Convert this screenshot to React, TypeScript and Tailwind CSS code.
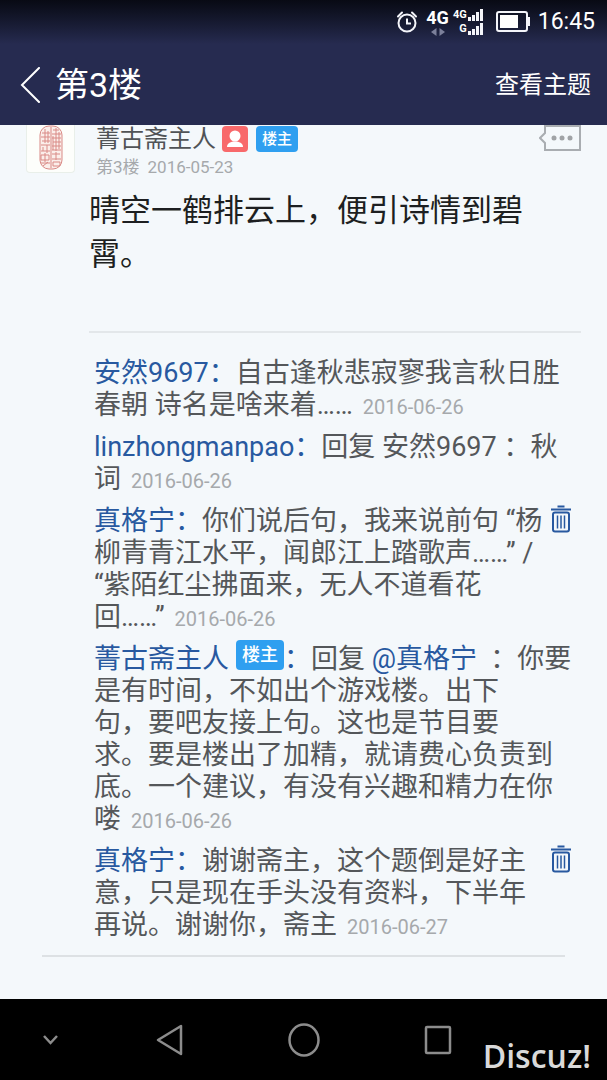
import type { ReactNode } from "react";

type Reply = {
    id: number;
    author: string;
    isOwner?: boolean;
    canDelete?: boolean;
    date: string;
    content: ReactNode;
};

const replies: Reply[] = [
    {
        id: 1,
        author: "安然9697",
        date: "2016-06-26",
        content: (
            <>
                自古逢秋悲寂寥我言秋日胜
                <br />
                春朝 诗名是啥来着……
            </>
        ),
    },
    {
        id: 2,
        author: "linzhongmanpao",
        date: "2016-06-26",
        content: (
            <>
                回复 安然9697 ：秋
                <br />词
            </>
        ),
    },
    {
        id: 3,
        author: "真格宁",
        canDelete: true,
        date: "2016-06-26",
        content: (
            <>
                你们说后句，我来说前句 “杨
                <br />
                柳青青江水平，闻郎江上踏歌声……” /
                <br />
                “紫陌红尘拂面来，无人不道看花
                <br />
                回……”
            </>
        ),
    },
    {
        id: 4,
        author: "菁古斋主人",
        isOwner: true,
        date: "2016-06-26",
        content: (
            <>
                回复{" "}
                <a href="#user" className="text-[#2859a0]">
                    @真格宁
                </a>
                &nbsp; ：你要
                <br />
                是有时间，不如出个游戏楼。出下
                <br />
                句，要吧友接上句。这也是节目要
                <br />
                求。要是楼出了加精，就请费心负责到
                <br />
                底。一个建议，有没有兴趣和精力在你
                <br />喽
            </>
        ),
    },
    {
        id: 5,
        author: "真格宁",
        canDelete: true,
        date: "2016-06-27",
        content: (
            <>
                谢谢斋主，这个题倒是好主
                <br />
                意，只是现在手头没有资料，下半年
                <br />
                再说。谢谢你，斋主
            </>
        ),
    },
];

function StatusBar() {
    return (
        <div className="flex h-11 items-center justify-end bg-linear-to-b from-[#080a14] to-[#262b50] pr-3 text-white">
            <svg width="22" height="24" viewBox="0 0 22 24" fill="none" stroke="#f4f5fa" strokeWidth="2">
                <circle cx="11" cy="13" r="8.5" />
                <path d="M11 8.5V13.5H15" />
                <path d="M2 6.5L6 2.5M20 6.5L16 2.5" strokeLinecap="round" />
            </svg>
            <div className="ml-2 flex flex-col items-center">
                <span className="text-lg leading-5 font-bold">4G</span>
                <svg width="14" height="8" viewBox="0 0 14 8" fill="#7c809a">
                    <path d="M5.5 0V8L0 4ZM8.5 0V8L14 4Z" />
                </svg>
            </div>
            <div className="ml-1 flex flex-col items-end text-[11px] leading-[14px] font-bold">
                <div className="flex items-center">
                    4G
                    <SignalBars />
                </div>
                <div className="flex items-center">
                    G
                    <SignalBars />
                </div>
            </div>
            <svg className="ml-3" width="34" height="22" viewBox="0 0 34 22" fill="none">
                <rect x="1" y="1" width="30" height="19" rx="2" stroke="#f4f5fa" strokeWidth="2" />
                <rect x="4" y="4" width="18" height="13" fill="#fff" />
                <path d="M32 6H34V15H32Z" fill="#f4f5fa" />
            </svg>
            <span className="ml-2 text-[23px] leading-7">16:45</span>
        </div>
    );
}

function SignalBars() {
    return (
        <svg width="17" height="12" viewBox="0 0 17 12" fill="#f4f5fa">
            <path d="M1 8H4V12H1ZM5 6H8V12H5ZM9 3H12V12H9ZM13 0H16V12H13Z" />
        </svg>
    );
}

function Seal() {
    return (
        <svg width="49" height="49" viewBox="0 0 49 49" fill="none" stroke="#d98a86" strokeWidth="1">
            <rect x="13" y="1" width="22" height="43" rx="9" fill="#fbeeea" />
            <path d="M15 8H23M14 12H23M18 4V18M15 16H23M21 6V18M14 20H23M16 22V26M20 20V28M14 26H23" />
            <path d="M26 5H32M25 9H34M29 3V26M25 13H34M26 17H34M25 21H34M32 7V24M26 11V25M25 25H34" />
            <path d="M14 30H22V35H14ZM18 28V37M14 38H23M16 41L21 37M25 29H33M29 27V35M25 34H34M26 37H33V41H26ZM24 2V43" />
        </svg>
    );
}

function TrashIcon() {
    return (
        <svg width="22" height="28" viewBox="0 0 22 28" fill="none" stroke="#2859a0" strokeWidth="2">
            <path d="M1 4.5H21" />
            <path d="M7.500 1.5H14.5" />
            <rect x="3" y="7.5" width="16" height="19" rx="2" />
            <path d="M7.500 10.5V23.5M11 10.5V23.5M14.5 10.5V23.5" strokeWidth="1.5" />
        </svg>
    );
}

function ReplyItem({ reply }: { reply: Reply }) {
    return (
        <li className="flex items-start justify-between">
            <p>
                <a href="#user" className="text-[#2859a0]">
                    {reply.author}
                </a>
                {reply.isOwner && (
                    <span className="-mt-3 ml-[7px] inline-block h-[30px] rounded bg-[#2f9ff0] px-[6px] align-middle text-lg leading-[30px] font-medium text-white">
                        楼主
                    </span>
                )}
                <span className="text-[#2859a0]">：</span>
                {reply.content}
                <time className="ml-[10px] text-xl leading-8 text-[#a6a9ac]">{reply.date}</time>
            </p>
            {reply.canDelete && (
                <button type="button" aria-label="删除" className="flex w-7 shrink-0 justify-center">
                    <TrashIcon />
                </button>
            )}
        </li>
    );
}

export default function App() {
    return (
        <div className="relative flex min-h-screen flex-col bg-[#f4f8fb] font-[Roboto,'Noto_Sans_CJK_SC',sans-serif]">
            <header className="bg-[#262b50] text-white">
                <StatusBar />
                <div className="flex h-[81px] items-center justify-between pr-4 pl-5">
                    <div className="flex items-center gap-[14px]">
                        <button type="button" aria-label="返回">
                            <svg width="21" height="36" viewBox="0 0 21 36" fill="none" stroke="#fff" strokeWidth="2">
                                <path d="M19 1L2 18L19 35" strokeLinecap="round" />
                            </svg>
                        </button>
                        <h1 className="text-[34px] leading-9">第3楼</h1>
                    </div>
                    <a href="#topic" className="text-2xl">
                        查看主题
                    </a>
                </div>
            </header>

            <main className="flex-1">
                <article className="px-[26px]">
                    <div className="flex items-start">
                        <div className="h-12 w-[49px] overflow-hidden rounded-b border border-t-0 border-[#e9efe9] bg-[#fdfefb]">
                            <Seal />
                        </div>
                        <div className="ml-[21px] flex-1">
                            <div className="flex h-7 items-center">
                                <a href="#user" className="text-2xl leading-7 text-[#505356]">
                                    菁古斋主人
                                </a>
                                <svg className="ml-[6px]" width="26" height="26" viewBox="0 0 26 26">
                                    <rect width="26" height="26" rx="4" fill="#f8696b" />
                                    <circle cx="13" cy="10" r="5.5" fill="#fff" />
                                    <path d="M5 21C5 17 9 15.5 13 15.5S21 17 21 21Z" fill="#fff" />
                                </svg>
                                <span className="ml-2 rounded bg-[#2f9ff0] px-[6px] text-[15px] leading-[26px] font-medium text-white">
                                    楼主
                                </span>
                            </div>
                            <div className="flex gap-2 text-[17px] leading-7 text-[#a6a9ac]">
                                <span>第3楼</span>
                                <time>2016-05-23</time>
                            </div>
                        </div>
                        <button type="button" aria-label="更多">
                            <svg width="42" height="26" viewBox="0 0 42 26" fill="none" stroke="#a9adb1" strokeWidth="2">
                                <path d="M6 1H41V25H6V18L1 13L6 8Z" />
                                <g fill="#a0a3a6" stroke="none">
                                    <circle cx="15" cy="13" r="2.5" />
                                    <circle cx="23" cy="13" r="2.5" />
                                    <circle cx="31" cy="13" r="2.5" />
                                </g>
                            </svg>
                        </button>
                    </div>
                    <p className="mt-2 ml-[63px] border-b-2 border-[#e3e7ea] pb-[54px] text-[31px] leading-[44px] text-[#1d1f21]">
                        晴空一鹤排云上，便引诗情到碧霄。
                    </p>
                </article>

                <ul className="mt-6 flex flex-col gap-2 pr-8 pl-[94px] text-[27px] leading-8 text-[#54575a]">
                    {replies.map((reply) => (
                        <ReplyItem key={reply.id} reply={reply} />
                    ))}
                </ul>
                <hr className="mx-[42px] mt-3 border-t-2 border-[#dde1e4]" />
            </main>

            <nav className="flex h-[81px] bg-black text-[#8c8c8c]">
                <div className="flex w-5/6">
                    <button type="button" aria-label="隐藏导航栏" className="flex flex-3 items-center justify-center">
                        <svg width="17" height="12" viewBox="0 0 17 12" fill="none" stroke="currentColor" strokeWidth="2.5">
                            <path d="M2 2L8.500 9L15 2" />
                        </svg>
                    </button>
                    <button type="button" aria-label="返回上一页" className="flex flex-4 items-center justify-center">
                        <svg width="28" height="32" viewBox="0 0 28 32" fill="none" stroke="currentColor" strokeWidth="2.5" strokeLinejoin="round">
                            <path d="M26 2V30L3 16Z" />
                        </svg>
                    </button>
                    <button type="button" aria-label="主屏幕" className="flex flex-4 items-center justify-center">
                        <svg width="32" height="34" viewBox="0 0 32 34" fill="none" stroke="currentColor" strokeWidth="2.5">
                            <ellipse cx="16" cy="17" rx="14.5" ry="15.500" />
                        </svg>
                    </button>
                    <button type="button" aria-label="最近任务" className="flex flex-4 items-center justify-center">
                        <svg width="28" height="30" viewBox="0 0 28 30" fill="none" stroke="currentColor" strokeWidth="2.5">
                            <rect x="2" y="2" width="24" height="26" rx="1" />
                        </svg>
                    </button>
                </div>
            </nav>
            <span className="absolute right-4 bottom-1 font-['Open_Sans',sans-serif] text-[32px] leading-10 font-semibold text-[#d9d9d9]">
                Discuz!
            </span>
        </div>
    );
}
